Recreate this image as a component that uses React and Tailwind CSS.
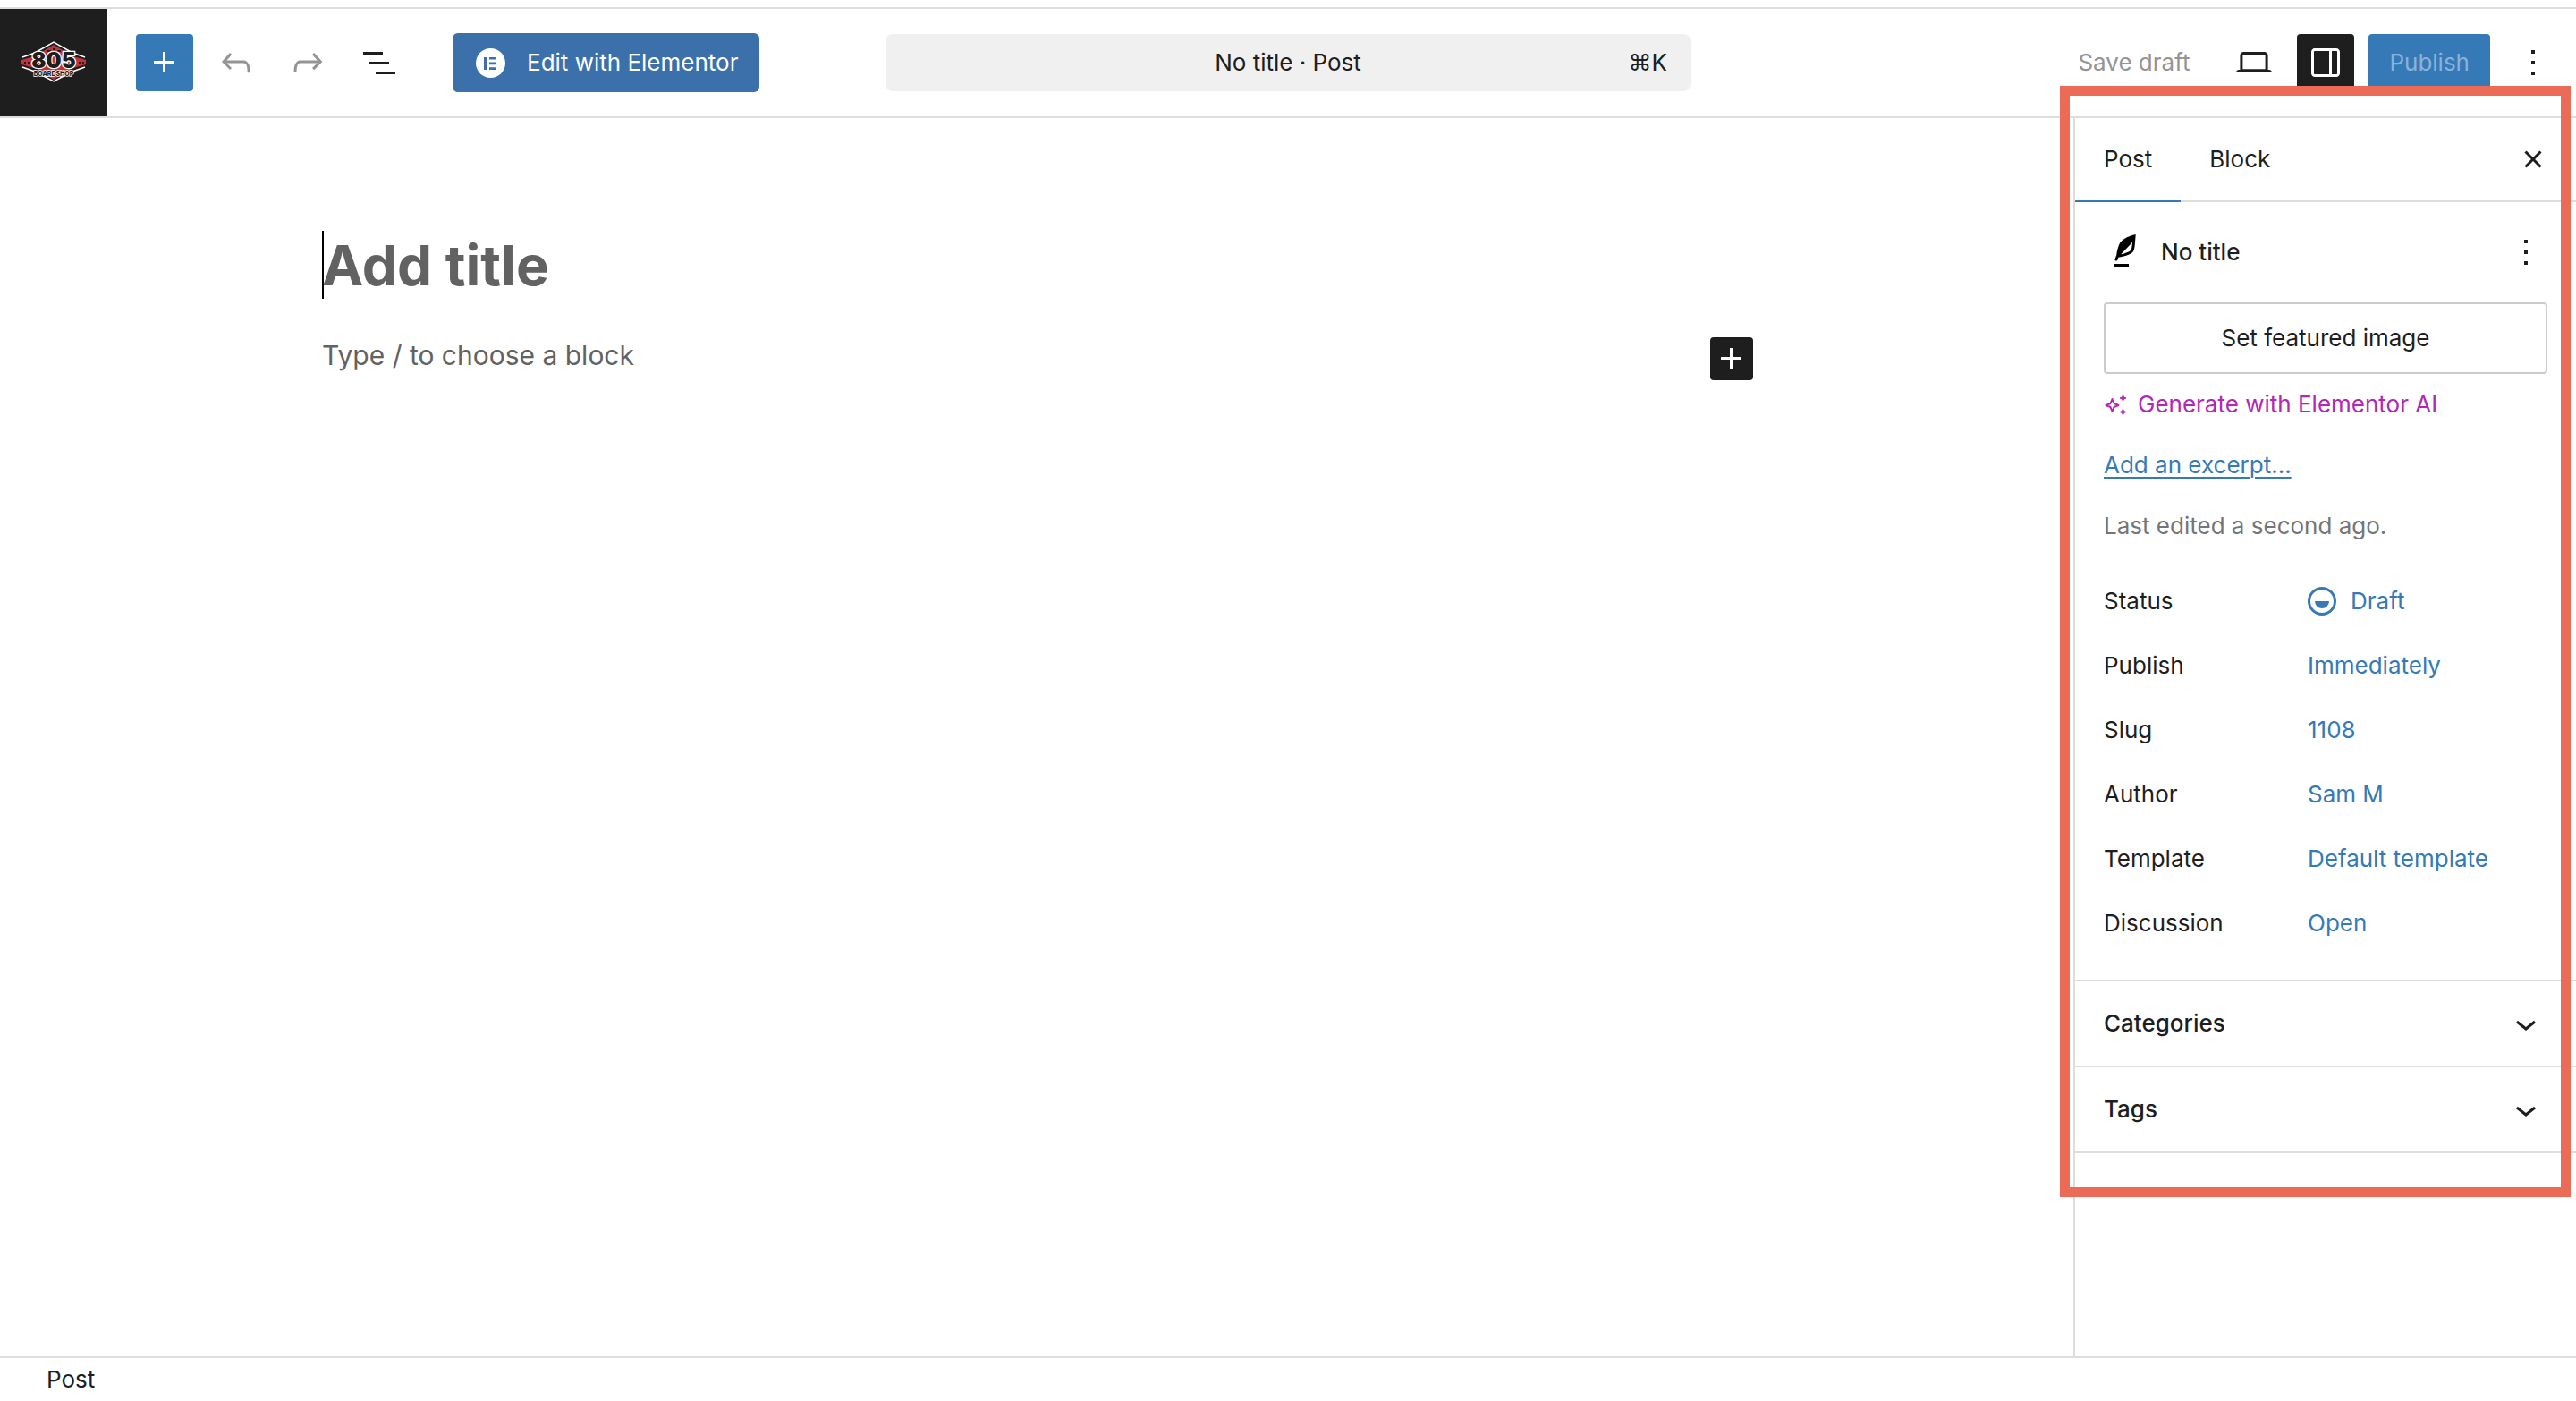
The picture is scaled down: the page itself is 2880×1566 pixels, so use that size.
import { useState } from 'react';

const icons = {
    plus: 'M11 12.5V17.5H12.5V12.5H17.5V11H12.5V6H11V11H6V12.5H11Z',
    undo: 'M18.3 11.7c-.6-.6-1.4-.9-2.3-.9H6.7l2.9-3.3-1.1-1-4.5 5L8.5 16l1-1-2.7-2.7H16c.5 0 .9.2 1.3.5 1 1 1 3.4 1 4.5v.3h1.5v-.2c0-1.5 0-4.3-1.5-5.7z',
    redo: 'M15.6 6.5l-1.1 1 2.9 3.3H8c-.9 0-1.7.3-2.3.9-1.4 1.5-1.4 4.2-1.4 5.6v.2h1.5v-.3c0-1.1 0-3.5 1-4.5.3-.3.7-.5 1.3-.5h9.2L14.5 15l1.1 1.1 4.6-4.6-4.6-5z',
    listView: 'M3 6h11v1.5H3V6Zm3.5 5.5h11V13h-11v-1.5ZM21 17H10v1.5h11V17Z',
    desktop: 'M20.5 16h-.7V8c0-1.1-.9-2-2-2H6.2c-1.1 0-2 .9-2 2v8h-.7c-.8 0-1.5.7-1.5 1.5h20c0-.8-.7-1.5-1.5-1.5zM5.7 8c0-.3.2-.5.5-.5h11.6c.3 0 .5.2.5.5v7.6H5.7V8z',
    drawer: 'M18 4H6c-1.1 0-2 .9-2 2v12c0 1.1.9 2 2 2h12c1.1 0 2-.9 2-2V6c0-1.1-.9-2-2-2zm-4 14.5H6c-.3 0-.5-.2-.5-.5V6c0-.3.2-.5.5-.5h8v13zm4.5-.5c0 .3-.2.5-.5.5h-2.5v-13H18c.3 0 .5.2.5.5v12z',
    more: 'M13 19h-2v-2h2v2zm0-6h-2v-2h2v2zm0-6h-2V5h2v2z',
    close: 'M12 13.06l3.712 3.713 1.061-1.06L13.061 12l3.712-3.712-1.06-1.06L12 10.938 8.288 7.227l-1.061 1.06L10.939 12l-3.712 3.712 1.06 1.061L12 13.061z',
    chevron: 'M17.5 11.6L12 16l-5.5-4.4.9-1.2L12 14l4.5-3.6 1 1.2z',
    draft: 'M12 18.5a6.5 6.5 0 1 1 0-13 6.5 6.5 0 0 1 0 13ZM4 12a8 8 0 1 1 16 0 8 8 0 0 1-16 0Zm8 4a4 4 0 0 0 4-4H8a4 4 0 0 0 4 4Z',
    quill: 'M17.8 2l-.9.3c-.1 0-3.6 1-5.2 2.1C10 5.5 9.3 6.5 8.9 7.1c-.6.9-1.7 4.7-1.7 6.3l-.9 2.3c-.2.4 0 .8.4 1 .1 0 .2.1.3.1.3 0 .6-.2.7-.5l.6-1.5c.3 0 .7-.1 1.2-.2.7-.1 1.4-.3 2.2-.5.8-.2 1.6-.5 2.4-.8.7-.3 1.4-.7 1.9-1.2s.8-1.2 1-1.9c.2-.7.3-1.6.4-2.4.1-.8.1-1.7.2-2.5 0-.8.1-1.5.2-2.1V2zm-1.9 5.6c-.1.8-.2 1.5-.3 2.1-.2.6-.4 1-.6 1.3-.3.3-.8.6-1.4.9-.7.3-1.4.5-2.2.8-.6.2-1.3.3-1.8.4L15 7.5c.3-.3.6-.7 1-1.1 0 .4 0 .8-.1 1.2zM6 20h8v-1.5H6V20z',
};

const Icon = ({ name, className = '' }) => (
    <svg viewBox="0 0 24 24" className={`size-12 shrink-0 ${className}`} fill="currentColor" fillRule="evenodd" aria-hidden="true">
        <path d={icons[name]} />
    </svg>
);

const IconButton = ({ icon, label, className = '' }) => (
    <button type="button" aria-label={label} className={`flex size-16 shrink-0 items-center justify-center rounded ${className}`}>
        <Icon name={icon} />
    </button>
);

const SiteLogo = () => (
    <svg viewBox="0 0 72 48" className="h-12 w-18" aria-hidden="true">
        <path d="M1 18 15 13 36 1 57 13 71 18M1 29 15 34 36 45 57 34 71 29" fill="none" stroke="#fff" strokeWidth="1.5" />
        <path d="M36 4 54 15V32L36 43 18 32V15Z" fill="#c1343a" />
        <path d="M0 21 14 17V30L0 26ZM72 21 58 17V30L72 26Z" fill="#c1343a" />
        <path d="M29 11h4M35 9h3M40 11h4M3 24h2M7 24h2M64 24h2M68 24h2" stroke="#1e1e1e" strokeWidth="2" />
        <text x="36" y="30" textAnchor="middle" fontFamily="Inter, sans-serif" fontSize="24" fontWeight="900" fill="#1e1e1e" stroke="#fff" strokeWidth="2.5" paintOrder="stroke">805</text>
        <text x="36" y="39" textAnchor="middle" fontFamily="Inter, sans-serif" fontSize="7" fontWeight="800" fill="#1e1e1e" stroke="#fff" strokeWidth="1.4" paintOrder="stroke">BOARDSHOP</text>
    </svg>
);

const ElementorIcon = () => (
    <svg viewBox="0 0 33 33" className="size-[33px] shrink-0" aria-hidden="true">
        <circle cx="16.5" cy="16.5" r="16.5" fill="#fff" />
        <path d="M9 10h3v14H9zM15 10h8v2.6h-8zM15 15.6h8v2.6h-8zM15 21.2h8V24h-8z" fill="#3b70ab" />
    </svg>
);

const SparkleIcon = () => (
    <svg viewBox="0 0 26 26" className="size-[26px] shrink-0" fill="currentColor" aria-hidden="true">
        <path d="M9.5 7 11.5 12 16.5 14 11.5 16 9.5 21 7.5 16 2.5 14 7.5 12Z" fill="none" stroke="currentColor" strokeWidth="2" strokeLinejoin="round" />
        <path d="M21.5 2.5 22.5 5l2.5 1-2.5 1-1 2.5-1-2.5L18 6l2.5-1ZM21.5 18l1 2.5 2.5 1-2.5 1-1 2.5-1-2.5-2.5-1 2.5-1Z" stroke="currentColor" strokeLinejoin="round" />
    </svg>
);

const rows = [
    { label: 'Status', value: 'Draft', icon: 'draft' },
    { label: 'Publish', value: 'Immediately' },
    { label: 'Slug', value: '1108' },
    { label: 'Author', value: 'Sam M' },
    { label: 'Template', value: 'Default template' },
    { label: 'Discussion', value: 'Open' },
];

const Header = () => (
    <header className="grid grid-cols-[1fr_minmax(0,900px)_1fr] items-center border-y-2 border-[#ddd]">
        <div className="flex items-center">
            <a href="#dashboard" aria-label="View posts" className="flex size-30 items-center justify-center bg-[#1e1e1e]">
                <SiteLogo />
            </a>
            <div className="ml-8 flex items-center gap-4">
                <IconButton icon="plus" label="Block inserter" className="bg-[#357ab6] text-white" />
                <IconButton icon="undo" label="Undo" className="text-[#949494]" />
                <IconButton icon="redo" label="Redo" className="text-[#949494]" />
                <IconButton icon="listView" label="Document overview" />
            </div>
            <button type="button" className="ml-[50px] flex h-[66px] items-center gap-6 rounded-md bg-[#3b70ab] pr-6 pl-[26px] whitespace-nowrap text-white">
                <ElementorIcon />
                Edit with Elementor
            </button>
        </div>

        <button type="button" className="grid h-16 grid-cols-[1fr_auto_1fr] items-center rounded-lg bg-[#f0f0f0] px-[26px]">
            <span className="col-start-2">No title · Post</span>
            <span className="text-right">⌘K</span>
        </button>

        <div className="flex items-center justify-end gap-4 pr-4">
            <button type="button" className="h-16 px-6 text-[#949494]">Save draft</button>
            <IconButton icon="desktop" label="View" />
            <IconButton icon="drawer" label="Settings" className="bg-[#1e1e1e] text-white" />
            <button type="button" className="h-16 rounded bg-[#357ab6] px-[23px] text-[#8ab2d6]">Publish</button>
            <IconButton icon="more" label="Options" />
        </div>
    </header>
);

const Editor = () => {
    const [title, setTitle] = useState('');
    const [block, setBlock] = useState('');

    return (
        <main className="flex-1 pt-[126px] pr-8 pl-[34px]">
            <div className="mx-auto max-w-[1600px]">
                <div className="relative">
                    <input
                        type="text"
                        aria-label="Add title"
                        className="block h-[76px] w-full text-[62px] font-bold outline-none placeholder:text-[#626262]"
                        placeholder="Add title"
                        value={title}
                        onChange={(e) => setTitle(e.target.value)}
                    />
                    <span className="absolute inset-y-0 left-0 w-0.5 bg-black"></span>
                </div>
                <div className="mt-[43px] flex items-start">
                    <input
                        type="text"
                        aria-label="Empty block"
                        className="h-10 flex-1 text-[30px] outline-none placeholder:text-[#626262]"
                        placeholder="Type / to choose a block"
                        value={block}
                        onChange={(e) => setBlock(e.target.value)}
                    />
                    <button type="button" aria-label="Add block" className="rounded bg-[#1e1e1e] text-white">
                        <Icon name="plus" />
                    </button>
                </div>
            </div>
        </main>
    );
};

const Sidebar = () => (
    <aside className="relative w-[562px] shrink-0 border-l-2 border-[#ddd]">
        <div className="flex h-[94px] items-stretch border-b-2 border-[#ddd] pr-4">
            <button type="button" className="-mb-0.5 border-b-3 border-[#357ab6] px-8">Post</button>
            <button type="button" className="px-8">Block</button>
            <div className="ml-auto flex items-center">
                <IconButton icon="close" label="Close Settings" />
            </div>
        </div>

        <div className="px-8 pt-6 pb-[31px]">
            <div className="flex items-center gap-4">
                <Icon name="quill" className="text-black" />
                <h2 className="flex-1 font-medium">No title</h2>
                <IconButton icon="more" label="Actions" className="-mr-2" />
            </div>
            <button type="button" className="mt-6 h-20 w-full rounded border-2 border-[#ccc]">Set featured image</button>
            <button type="button" className="mt-3.5 flex items-center gap-3 text-[#b127b6]">
                <SparkleIcon />
                Generate with Elementor AI
            </button>
            <a href="#excerpt" className="mt-7 block text-[#357ab6] underline decoration-2 underline-offset-4">Add an excerpt…</a>
            <p className="mt-7 text-[#757575]">Last edited a second ago.</p>

            <dl className="mt-8 flex flex-col gap-2">
                {rows.map((row) => (
                    <div key={row.label} className="flex h-16 items-center">
                        <dt className="w-57">{row.label}</dt>
                        <dd>
                            <button type="button" className="flex items-center gap-2 text-[#357ab6]">
                                {row.icon && <Icon name={row.icon} className="-ml-2" />}
                                {row.value}
                            </button>
                        </dd>
                    </div>
                ))}
            </dl>
        </div>

        {['Categories', 'Tags'].map((panel) => (
            <button key={panel} type="button" className="flex h-24 w-full items-center justify-between border-t-2 border-[#ddd] px-8 font-medium">
                {panel}
                <Icon name="chevron" />
            </button>
        ))}
        <div className="border-t-2 border-[#ddd]"></div>

        {/* Highlight frame over the settings panel */}
        <div className="pointer-events-none absolute -top-9 right-[6px] -left-[17px] h-[1242px] border-11 border-[#ec6b56]"></div>
    </aside>
);

const App = () => (
    <div className="flex min-h-screen flex-col bg-white pt-2 font-[Inter,'DejaVu_Sans',sans-serif] text-[26px] leading-10 text-[#1e1e1e]">
        <Header />
        <div className="flex flex-1">
            <Editor />
            <Sidebar />
        </div>
        <footer className="flex h-[50px] items-center border-t-2 border-[#ddd] px-13">Post</footer>
    </div>
);

export default App;
